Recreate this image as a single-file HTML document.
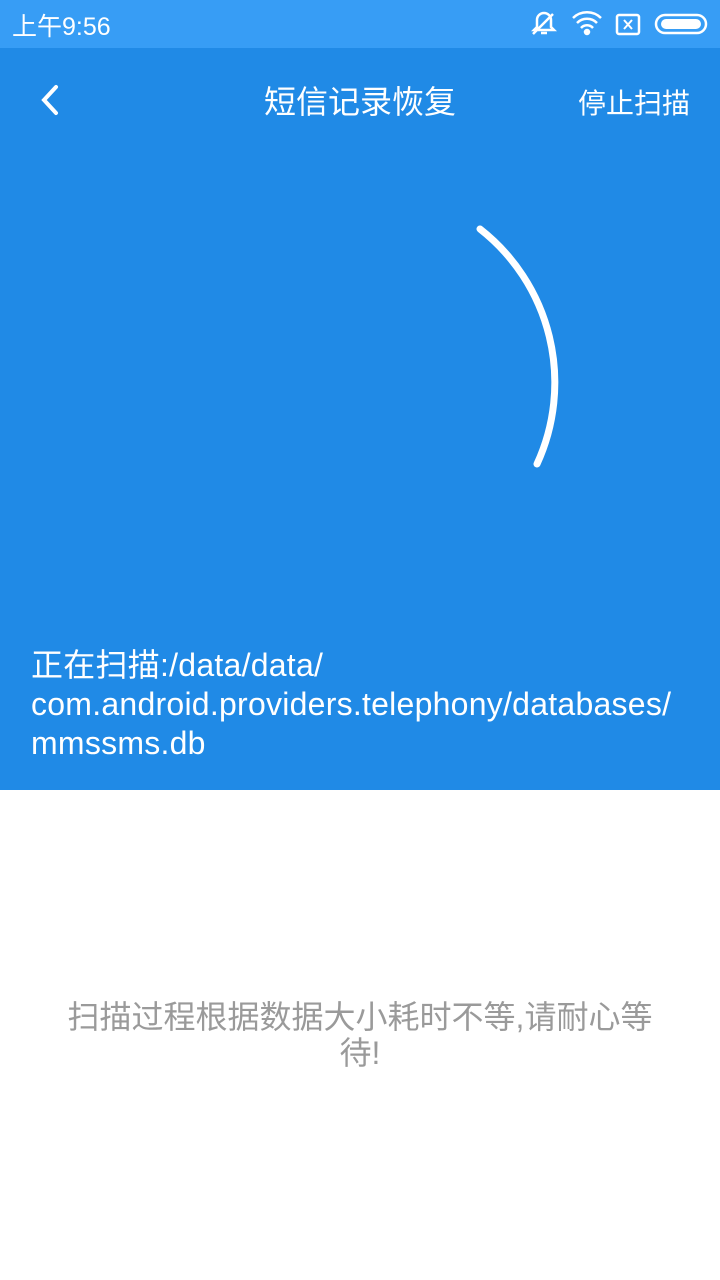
<!DOCTYPE html>
<html><head><meta charset="utf-8"><style>
body{margin:0;width:720px;height:1280px;position:relative;background:#fff;font-family:"Liberation Sans","Noto Sans CJK SC",sans-serif;overflow:hidden}
.sb{position:absolute;top:0;left:0;width:720px;height:48px;background:#379df5;color:#fff}
.top{position:absolute;top:48px;left:0;width:720px;height:742px;background:#208ae6;color:#fff}
</style></head><body>
<div class="sb">
<div style="position:absolute;left:12px;top:7px;font-size:25px;">上午9:56</div>
<svg width="720" height="48" style="position:absolute;left:0;top:0" fill="none" stroke="#fff" stroke-width="2.5">
<path d="M537 27v-7a7 7 0 0 1 14 0v7l3 3h-20z M541 33h6 M533 34l20-20"/>
<path d="M573 18a20 20 0 0 1 28 0M577 23a14 14 0 0 1 20 0M581 28a8 8 0 0 1 12 0"/><circle cx="587" cy="32" r="2" fill="#fff"/>
<rect x="617" y="15" width="22" height="19" rx="2"/><path d="M624 20l8 9M632 20l-8 9" stroke-width="2"/>
<rect x="656" y="15" width="50" height="18" rx="9"/><rect x="661" y="19" width="40" height="10" rx="5" fill="#fff" stroke="none"/>
</svg>
</div>
<div class="top">
<svg width="720" height="742" style="position:absolute;left:0;top:0" fill="none" stroke="#fff" stroke-linecap="round">
<path d="M56 39l-12 13 12 13" stroke-width="4"/>
<path d="M480 181A195 195 0 0 1 537 416" stroke-width="7"/>
</svg>
<div style="position:absolute;left:0;width:720px;top:29px;text-align:center;font-size:32px">短信记录恢复</div>
<div style="position:absolute;right:30px;top:34px;font-size:28px">停止扫描</div>
<div style="position:absolute;left:31px;top:598px;font-size:32px;line-height:39px;width:690px;letter-spacing:0.25px;word-break:break-all">正在扫描:/data/data/<br>com.android.providers.telephony/databases/<br>mmssms.db</div>
</div>
<div style="position:absolute;left:40px;width:640px;top:999px;text-align:center;font-size:32px;line-height:36px;color:#9a9a9a">扫描过程根据数据大小耗时不等,请耐心等<br>待!</div>
</body></html>
